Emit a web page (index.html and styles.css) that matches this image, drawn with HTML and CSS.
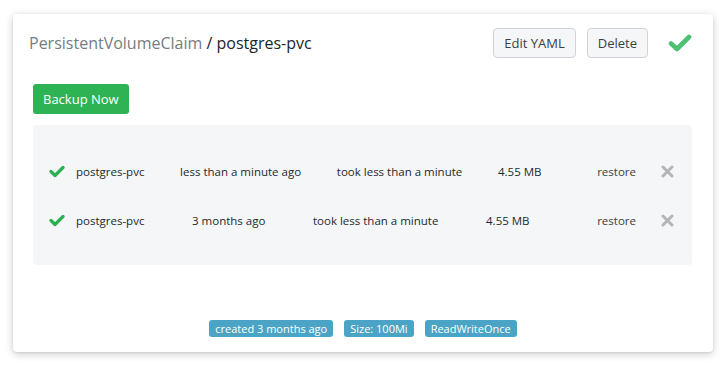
FILE: index.html
```html
<!DOCTYPE html>
<html lang="en">
<head>
    <meta charset="UTF-8">
    <meta name="viewport" content="width=device-width, initial-scale=1.0">
    <title>PersistentVolumeClaim / postgres-pvc</title>
    <link rel="stylesheet" href="styles.css">
</head>
<body>
    <div class="card">
        <div class="card-header">
            <h1 class="title"><span class="kind">PersistentVolumeClaim</span> / postgres-pvc</h1>
            <div class="actions">
                <button class="btn">Edit YAML</button>
                <button class="btn">Delete</button>
                <svg class="status-icon" width="24" height="18" viewBox="0 0 24 18">
                    <polyline points="3,9.5 9,15 21,3" fill="none" stroke="#4cc174" stroke-width="4.6" stroke-linecap="round" stroke-linejoin="round"/>
                </svg>
            </div>
        </div>
        <div class="card-body">
            <button class="btn-backup">Backup Now</button>
            <div class="backups">
                <div class="backup-row">
                    <svg class="row-check" width="16" height="13" viewBox="0 0 16 13">
                        <polyline points="2,6.5 6,10.5 14,2.5" fill="none" stroke="#2bb152" stroke-width="3.2" stroke-linecap="round" stroke-linejoin="round"/>
                    </svg>
                    <div class="backup-info">
                        <span>postgres-pvc</span>
                        <span>less than a minute ago</span>
                        <span>took less than a minute</span>
                        <span>4.55 MB</span>
                        <a href="#" class="restore">restore</a>
                    </div>
                    <svg class="row-remove" width="13" height="13" viewBox="0 0 13 13">
                        <path d="M2 2 L11 11 M11 2 L2 11" stroke="#b3b5b8" stroke-width="3" stroke-linecap="round"/>
                    </svg>
                </div>
                <div class="backup-row">
                    <svg class="row-check" width="16" height="13" viewBox="0 0 16 13">
                        <polyline points="2,6.5 6,10.5 14,2.5" fill="none" stroke="#2bb152" stroke-width="3.2" stroke-linecap="round" stroke-linejoin="round"/>
                    </svg>
                    <div class="backup-info">
                        <span>postgres-pvc</span>
                        <span>3 months ago</span>
                        <span>took less than a minute</span>
                        <span>4.55 MB</span>
                        <a href="#" class="restore">restore</a>
                    </div>
                    <svg class="row-remove" width="13" height="13" viewBox="0 0 13 13">
                        <path d="M2 2 L11 11 M11 2 L2 11" stroke="#b3b5b8" stroke-width="3" stroke-linecap="round"/>
                    </svg>
                </div>
            </div>
        </div>
        <div class="card-footer">
            <span class="tag">created 3 months ago</span>
            <span class="tag">Size: 100Mi</span>
            <span class="tag">ReadWriteOnce</span>
        </div>
    </div>
</body>
</html>
```

FILE: styles.css
```css
html, body {
    margin: 0;
    padding: 0;
    background: #ffffff;
}
body {
    font-family: 'Open Sans', 'Noto Sans', sans-serif;
    color: #212529;
    padding: 14px 0 13px 13px;
}
.card {
    width: 700px;
    height: 338px;
    background: #ffffff;
    border-radius: 4px;
    box-shadow: 0 2px 8px rgba(0, 0, 0, 0.2), 0 1px 2px rgba(0, 0, 0, 0.08);
    display: flex;
    flex-direction: column;
    box-sizing: border-box;
}
.card-header {
    display: flex;
    align-items: center;
    justify-content: space-between;
    padding: 14px 21px 0 16px;
}
.title {
    margin: 0;
    font-size: 16px;
    font-weight: 400;
    color: #212529;
}
.kind {
    color: #757c83;
}
.actions {
    display: flex;
    align-items: center;
}
.btn {
    height: 30px;
    padding: 0 10px;
    margin-left: 11px;
    background: #f5f6f8;
    border: 1px solid #cfd3d8;
    border-radius: 4px;
    font-family: inherit;
    font-size: 13px;
    color: #3a3f45;
}
.status-icon {
    margin-left: 20px;
}
.card-body {
    padding: 26px 21px 0 20px;
}
.btn-backup {
    height: 30px;
    padding: 0 10px;
    background: #2eb354;
    color: #ffffff;
    border: none;
    border-radius: 3px;
    font-family: inherit;
    font-size: 13px;
}
.backups {
    margin-top: 11px;
    height: 140px;
    box-sizing: border-box;
    padding: 22px 18px 20px 16px;
    background: #f5f6f8;
    border-radius: 4px;
}
.backup-row {
    display: flex;
    align-items: center;
    height: 49px;
    font-size: 11.5px;
    color: #24292e;
}
.row-check {
    margin-right: 11px;
}
.backup-info {
    flex: 1;
    display: flex;
    justify-content: space-between;
    margin-right: 25px;
}
.restore {
    color: #3a3f45;
    text-decoration: none;
    margin-left: 20px;
}
.card-footer {
    margin-top: auto;
    display: flex;
    justify-content: center;
    gap: 11px;
    padding-bottom: 15px;
}
.tag {
    height: 17px;
    line-height: 17px;
    padding: 0 6px;
    background: #4ba4c5;
    color: #ffffff;
    border-radius: 3px;
    font-size: 11px;
}
```
